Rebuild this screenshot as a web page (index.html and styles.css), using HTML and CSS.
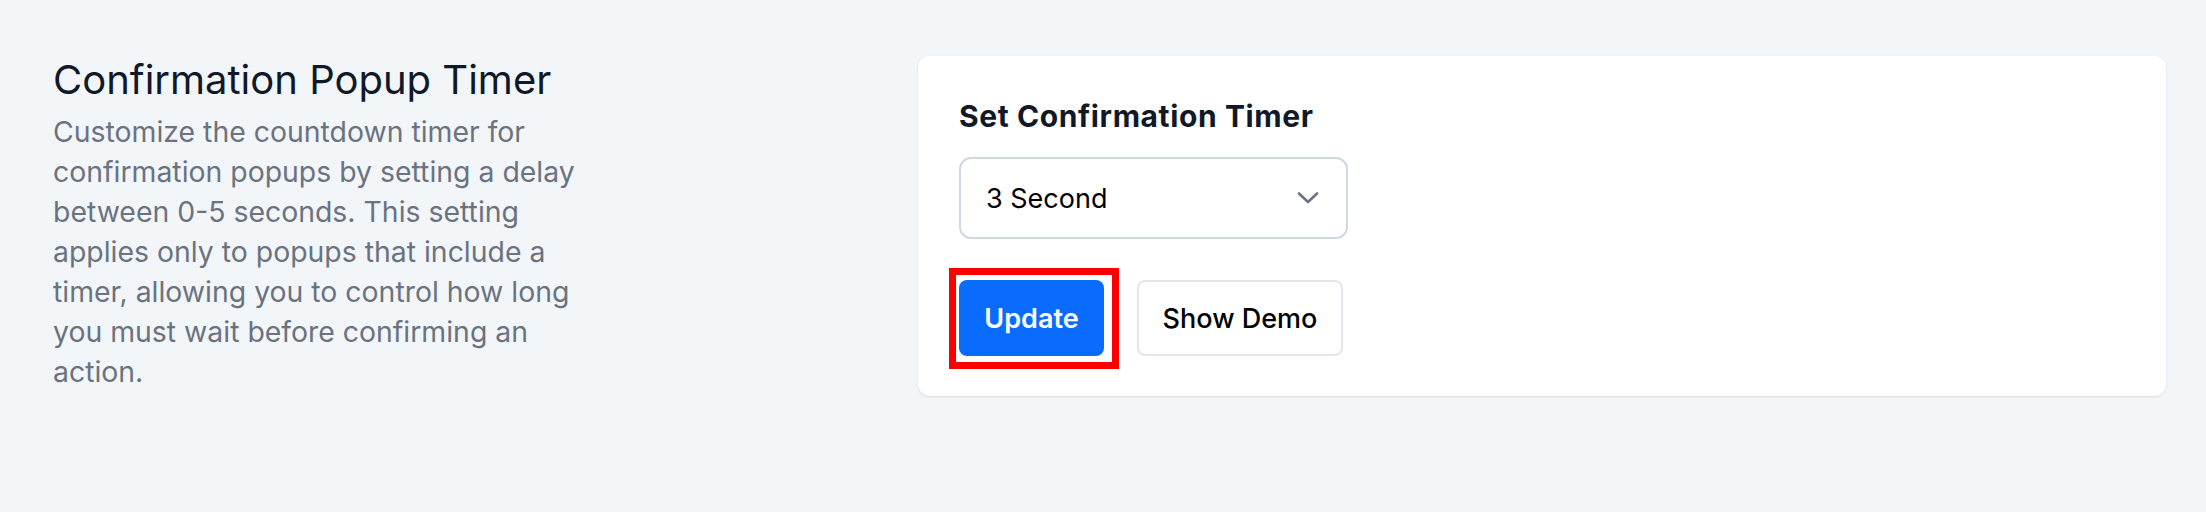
FILE: index.html
```html
<!DOCTYPE html>
<html lang="en">
<head>
<meta charset="utf-8">
<title>Confirmation Popup Timer</title>
<link rel="stylesheet" href="styles.css">
</head>
<body>
<main class="page">
  <section class="intro">
    <h1 class="intro-title">Confirmation Popup Timer</h1>
    <p class="intro-text">Customize the countdown timer for confirmation popups by setting a delay between 0-5 seconds. This setting applies only to popups that include a timer, allowing you to control how long you must wait before confirming an action.</p>
  </section>
  <section class="card">
    <h2 class="field-label">Set Confirmation Timer</h2>
    <div class="select">
      <span class="select-value">3 Second</span>
      <svg class="chevron" width="22" height="12" viewBox="0 0 22 12" aria-hidden="true"><path d="M2 1.5 L11 10 L20 1.5" fill="none" stroke="#6b7280" stroke-width="2.6" stroke-linecap="round" stroke-linejoin="round"/></svg>
    </div>
    <div class="actions">
      <span class="highlight"><button class="btn btn-primary" type="button">Update</button></span>
      <button class="btn btn-outline" type="button">Show Demo</button>
    </div>
  </section>
</main>
</body>
</html>
```
FILE: styles.css
```css
html, body {
  margin: 0;
  padding: 0;
}
body {
  background: #f3f6f9;
  font-family: "Inter", "Liberation Sans", sans-serif;
  color: #111827;
}
.page {
  display: flex;
  padding: 56px 40px 0 53px;
  height: 512px;
  box-sizing: border-box;
}
.intro {
  flex: 0 0 865px;
}
.intro-title {
  margin: 0;
  font-size: 40px;
  line-height: 48px;
  font-weight: 400;
  color: #111827;
}
.intro-text {
  margin: 8px 0 0;
  width: 550px;
  font-size: 28.4px;
  line-height: 40px;
  color: #6b7280;
}
.card {
  flex: 1;
  align-self: flex-start;
  background: #ffffff;
  border-radius: 12px;
  box-shadow: 0 1px 3px rgba(15, 23, 42, 0.08), 0 1px 2px rgba(15, 23, 42, 0.04);
  padding: 40px 41px;
  box-sizing: border-box;
}
.field-label {
  margin: 0;
  font-size: 30px;
  line-height: 40px;
  font-weight: 700;
  letter-spacing: 0.6px;
  color: #111827;
}
.select {
  margin-top: 21px;
  width: 389px;
  height: 82px;
  box-sizing: border-box;
  border: 2px solid #cfd8e3;
  border-radius: 12px;
  display: flex;
  align-items: center;
  justify-content: space-between;
  padding: 0 27px 0 25px;
}
.select-value {
  font-size: 27px;
  color: #000000;
  font-weight: 400;
}
.chevron {
  display: block;
}
.actions {
  margin-top: 41px;
  display: flex;
  gap: 33px;
  align-items: center;
}
.highlight {
  position: relative;
  display: inline-flex;
}
.highlight::after {
  content: "";
  position: absolute;
  top: -12px;
  right: -15px;
  bottom: -13px;
  left: -10px;
  border: 7px solid #ff0000;
  pointer-events: none;
}
.btn {
  height: 76px;
  border-radius: 8px;
  font-family: "Inter", "Liberation Sans", sans-serif;
  font-size: 27px;
  padding: 0;
  white-space: nowrap;
  text-align: center;
  cursor: pointer;
  box-sizing: border-box;
}
.btn-primary {
  width: 145px;
  background: #0a6cff;
  color: #ffffff;
  border: none;
  font-weight: 600;
}
.btn-outline {
  width: 206px;
  background: #ffffff;
  color: #000000;
  border: 2px solid #e3e7ec;
  font-weight: 500;
}
```
